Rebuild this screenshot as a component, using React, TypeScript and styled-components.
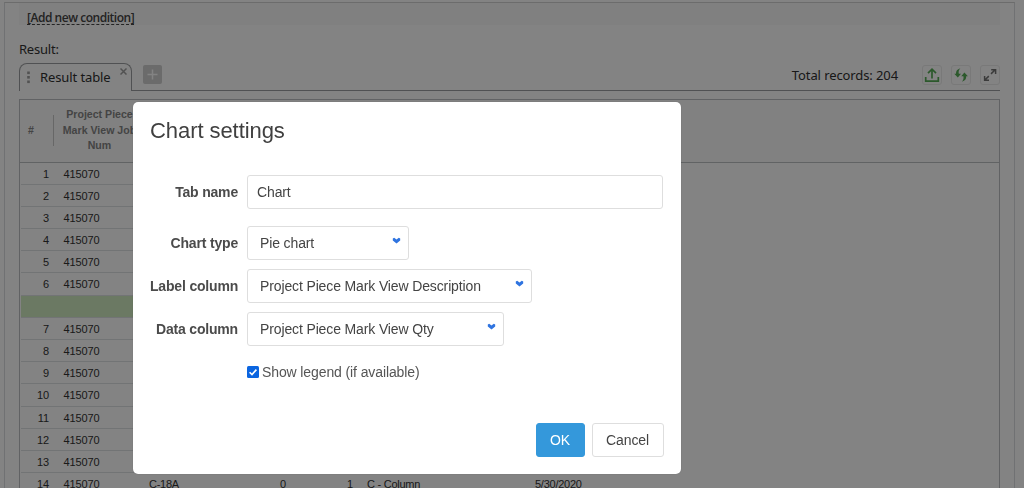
import React from "react";
import styled, { createGlobalStyle } from "styled-components";

const GlobalStyle = createGlobalStyle`
  * { box-sizing: border-box; }
  html, body { margin: 0; height: 100%; overflow: hidden; background: #fff; }
  body { font-family: "Liberation Sans", Arial, sans-serif; color: #444; }
`;

const uiFont = `"Noto Sans", "Open Sans", sans-serif`;

const Page = styled.div`
  height: 488px;
  padding: 2px 9px 0 4px;
  overflow: hidden;
`;

const Panel = styled.main`
  height: 500px;
  padding: 0 14px;
  border: 1px solid #dadde0;
  border-top: 1px solid #d2d2d2;
`;

const ConditionBar = styled.div`
  height: 22px;
  padding: 5px 8px 0;
  background: #fafafa;
`;

const ConditionLink = styled.a`
  display: inline-block;
  height: 16px;
  font: 600 12px/17px "Open Sans", "Noto Sans", sans-serif;
  letter-spacing: -0.47px;
  white-space: nowrap;
  color: #444;
  border-bottom: 1px dashed #444;
`;

const ResultLabel = styled.div`
  margin-top: 14px;
  height: 20px;
  font: 13px/20px ${uiFont};
  letter-spacing: -0.22px;
  color: #333;
`;

const TabStrip = styled.div`
  display: flex;
  height: 32px;
  margin-top: 4px;
`;

const Tab = styled.div`
  display: flex;
  width: 113px;
  height: 28px;
  padding: 0 4px 0 7px;
  border: 1px solid #9d9fa2;
  border-bottom: 0;
  border-radius: 8px 8px 0 0;
`;

const Grip = styled.svg`
  width: 4px;
  height: 14px;
  margin-top: 6px;
`;

const TabTitle = styled.span`
  margin-left: 9px;
  width: 73px;
  white-space: nowrap;
  font: 13px/27px ${uiFont};
  letter-spacing: -0.1px;
  color: #303030;
`;

const TabClose = styled.svg`
  width: 7px;
  height: 7px;
  margin: 4px 0 0 7px;
`;

const StripRest = styled.div`
  display: flex;
  flex: 1;
  padding-left: 11px;
  height: 28px;
  border-bottom: 1px solid #9d9fa2;
`;

const AddTab = styled.span`
  display: flex;
  width: 19px;
  height: 19px;
  margin-top: 2px;
  border-radius: 2px;
  background: #d0d0d0;
`;

const Total = styled.span`
  margin-left: auto;
  margin-right: 24px;
  font: 13px/25px ${uiFont};
  letter-spacing: -0.1px;
  color: #303030;
`;

const ToolGroup = styled.div`
  display: flex;
  gap: 9px;
  margin-top: 2px;
`;

const ToolButton = styled.span`
  display: flex;
  width: 20px;
  height: 20px;
  border: 1px solid #ebebeb;
  border-radius: 3px;
`;

const Grid = styled.div`
  height: 420px;
  margin-top: 4px;
  border: 1px solid #bdbfc2;
`;

const GridHeader = styled.div`
  display: flex;
  align-items: center;
  height: 62.5px;
  border-bottom: 1px solid #bdc0c2;
  background: #fbfbfb;
  font: bold 10.6px/15.5px "Liberation Sans", Arial, sans-serif;
  color: #858585;
`;

const NumberHeading = styled.span`
  width: 34px;
  height: 31px;
  padding-left: 8px;
  border-right: 1px solid #c8c8c8;
  line-height: 31px;
`;

const ColumnHeading = styled.span`
  width: 91px;
  padding-bottom: 1px;
  text-align: center;
  white-space: nowrap;
`;

const Row = styled.div<{ $group?: boolean }>`
  display: flex;
  width: 571px;
  height: 22.2px;
  border-bottom: 1px solid #dfe1e3;
  margin-left: 1px;
  background: ${({ $group }) => ($group ? "#d0ecc0" : "transparent")};
  font-size: 11px;
  line-height: 22px;
  letter-spacing: -0.1px;
  color: #333;
`;

const Cell = styled.span<{ $w: number; $right?: boolean; $gap?: number }>`
  flex: none;
  width: ${({ $w }) => $w}px;
  padding-left: ${({ $gap }) => $gap ?? 0}px;
  text-align: ${({ $right }) => ($right ? "right" : "left")};
  white-space: nowrap;
`;

const TextCell = styled(Cell)`
  letter-spacing: -0.25px;
`;

const Backdrop = styled.div`
  position: fixed;
  inset: 0;
  padding: 102px 0 0 133px;
  background: rgba(0, 0, 0, 0.486);
`;

const Dialog = styled.section`
  width: 547.5px;
  height: 372px;
  padding: 15px 17px 0;
  border-radius: 5px;
  background: #fff;
  box-shadow: 0 0 1px rgba(0, 0, 0, 0.35);
`;

const DialogTitle = styled.h2`
  margin: 0 0 31px;
  font-size: 22px;
  line-height: 27px;
  font-weight: 400;
  letter-spacing: -0.07px;
  color: #404040;
`;

const Field = styled.div<{ $after: number }>`
  display: flex;
  height: 34px;
  margin-bottom: ${({ $after }) => $after}px;
`;

const Label = styled.label`
  width: 88px;
  margin-right: 9px;
  text-align: right;
  white-space: nowrap;
  font-size: 14px;
  line-height: 34px;
  font-weight: 700;
  letter-spacing: -0.18px;
  color: #4b4b4b;
`;

const TextInput = styled.input`
  width: 416px;
  height: 34px;
  padding: 0 9px;
  border: 1px solid #dedede;
  border-radius: 3px;
  font: 14px "Liberation Sans", Arial, sans-serif;
  letter-spacing: -0.13px;
  color: #444;
  outline: none;
`;

const SelectBox = styled.div<{ $w: number }>`
  display: flex;
  justify-content: space-between;
  width: ${({ $w }) => $w}px;
  height: 34px;
  padding: 0 7px 0 12px;
  border: 1px solid #dedede;
  border-radius: 3px;
  font-size: 14px;
  line-height: 33px;
  letter-spacing: -0.13px;
  white-space: nowrap;
  color: #444;
`;

const Chevron = styled.svg`
  width: 9px;
  height: 7px;
  margin-top: 10px;
`;

const CheckRow = styled.div`
  display: flex;
  align-items: center;
  gap: 3px;
  height: 20px;
  margin: 16px 0 41px 97px;
  font-size: 14px;
  letter-spacing: -0.11px;
  color: #555;
`;

const Footer = styled.footer`
  display: flex;
  justify-content: flex-end;
  gap: 7px;
`;

const Button = styled.button<{ $primary?: boolean }>`
  width: ${({ $primary }) => ($primary ? 49 : 72)}px;
  height: 34px;
  padding: 0;
  border: 1px solid ${({ $primary }) => ($primary ? "#3498db" : "#dedede")};
  border-radius: 3px;
  background: ${({ $primary }) => ($primary ? "#3498db" : "#fff")};
  font: 14px "Liberation Sans", Arial, sans-serif;
  letter-spacing: -0.13px;
  color: ${({ $primary }) => ($primary ? "#fff" : "#444")};
`;

const selects = [
  { label: "Chart type", value: "Pie chart", width: 162, after: 9 },
  { label: "Label column", value: "Project Piece Mark View Description", width: 284.5, after: 9 },
  { label: "Data column", value: "Project Piece Mark View Qty", width: 256.5, after: 0 },
];

const rows: (number | null)[] = [1, 2, 3, 4, 5, 6, null, 7, 8, 9, 10, 11, 12, 13, 14];

export default function App() {
  return (
    <>
      <GlobalStyle />
      <Page>
        <Panel>
          <ConditionBar>
            <ConditionLink>[Add new condition]</ConditionLink>
          </ConditionBar>
          <ResultLabel>Result:</ResultLabel>
          <TabStrip>
            <Tab>
              <Grip viewBox="0 0 4 14" fill="#a0a0a0">
                <rect x="0.2" y="1.5" width="2.6" height="2.6" />
                <rect x="0.2" y="6" width="2.6" height="2.6" />
                <rect x="0.2" y="10.5" width="2.6" height="2.6" />
              </Grip>
              <TabTitle>Result table</TabTitle>
              <TabClose viewBox="0 0 7 7" stroke="#a0a0a0" strokeWidth="1.5">
                <path d="M.5.5l6 6M6.5.5l-6 6" />
              </TabClose>
            </Tab>
            <StripRest>
              <AddTab>
                <svg width="19" height="19" viewBox="0 0 19 19" stroke="#fff" strokeWidth="1.5">
                  <path d="M9.5 4.5v10M4.5 9.5h10" />
                </svg>
              </AddTab>
              <Total>Total records: 204</Total>
              <ToolGroup>
                <ToolButton>
                  <svg width="18" height="18" viewBox="0 0 18 18" fill="none" stroke="#56ad56" strokeWidth="1.7">
                    <path d="M2.7 11v4.2h12.6V11M9 12.5V3.2M5 7.2l4-4 4 4" />
                  </svg>
                </ToolButton>
                <ToolButton>
                  <svg width="18" height="18" viewBox="0 0 18 18" fill="#56ad56">
                    <path d="M8.3 2.2C5.2 3.2 3.8 5 4 7.7H2.3L5.8 11.5 9 7.7H6.8C6.3 5.7 6.9 3.6 8.3 2.2z" />
                    <path d="M9.9 15.8c3.1-1 4.5-2.8 4.3-5.5h1.7l-3.5-3.8-3.2 3.8h2.2c.5 2-.1 4.1-1.5 5.5z" />
                  </svg>
                </ToolButton>
                <ToolButton>
                  <svg width="18" height="18" viewBox="0 0 18 18" fill="none" stroke="#747474" strokeWidth="1.5">
                    <path d="M10 7.9l4.2-4.2M10.2 3.7h4.4v4.4M7.8 10.1l-4.2 4.2M3.6 9.9v4.4h4.4" />
                  </svg>
                </ToolButton>
              </ToolGroup>
            </StripRest>
          </TabStrip>
          <Grid>
            <GridHeader>
              <NumberHeading>#</NumberHeading>
              <ColumnHeading>
                Project Piece
                <br />
                Mark View Job
                <br />
                Num
              </ColumnHeading>
            </GridHeader>
            {rows.map((n) =>
              n === null ? (
                <Row key="group" $group />
              ) : (
                <Row key={n}>
                  <Cell $w={28} $right>{n}</Cell>
                  <Cell $w={100} $gap={14.4}>415070</Cell>
                  {n === 14 && (
                    <>
                      <TextCell $w={60}>C-18A</TextCell>
                      <Cell $w={77} $right>0</Cell>
                      <Cell $w={67} $right>1</Cell>
                      <TextCell $w={182} $gap={14}>C - Column</TextCell>
                      <TextCell $w={56}>5/30/2020</TextCell>
                    </>
                  )}
                </Row>
              ),
            )}
          </Grid>
        </Panel>
      </Page>
      <Backdrop>
        <Dialog>
          <DialogTitle>Chart settings</DialogTitle>
          <Field $after={17}>
            <Label>Tab name</Label>
            <TextInput defaultValue="Chart" />
          </Field>
          {selects.map((s) => (
            <Field key={s.label} $after={s.after}>
              <Label>{s.label}</Label>
              <SelectBox $w={s.width}>
                {s.value}
                <Chevron viewBox="0 0 9 7" fill="#2f74e0">
                  <path d="M.8 1.6L2.2.8 4.5 2.6 6.8.8 8.2 1.6V3.4L4.5 6.5.8 3.4z" />
                </Chevron>
              </SelectBox>
            </Field>
          ))}
          <CheckRow>
            <svg width="12" height="12" viewBox="0 0 12 12">
              <rect width="12" height="12" rx="1.5" fill="#0b65e0" />
              <path d="M2.6 6.2l2.4 2.4 4.4-5" fill="none" stroke="#fff" strokeWidth="1.6" />
            </svg>
            Show legend (if available)
          </CheckRow>
          <Footer>
            <Button $primary>OK</Button>
            <Button>Cancel</Button>
          </Footer>
        </Dialog>
      </Backdrop>
    </>
  );
}
